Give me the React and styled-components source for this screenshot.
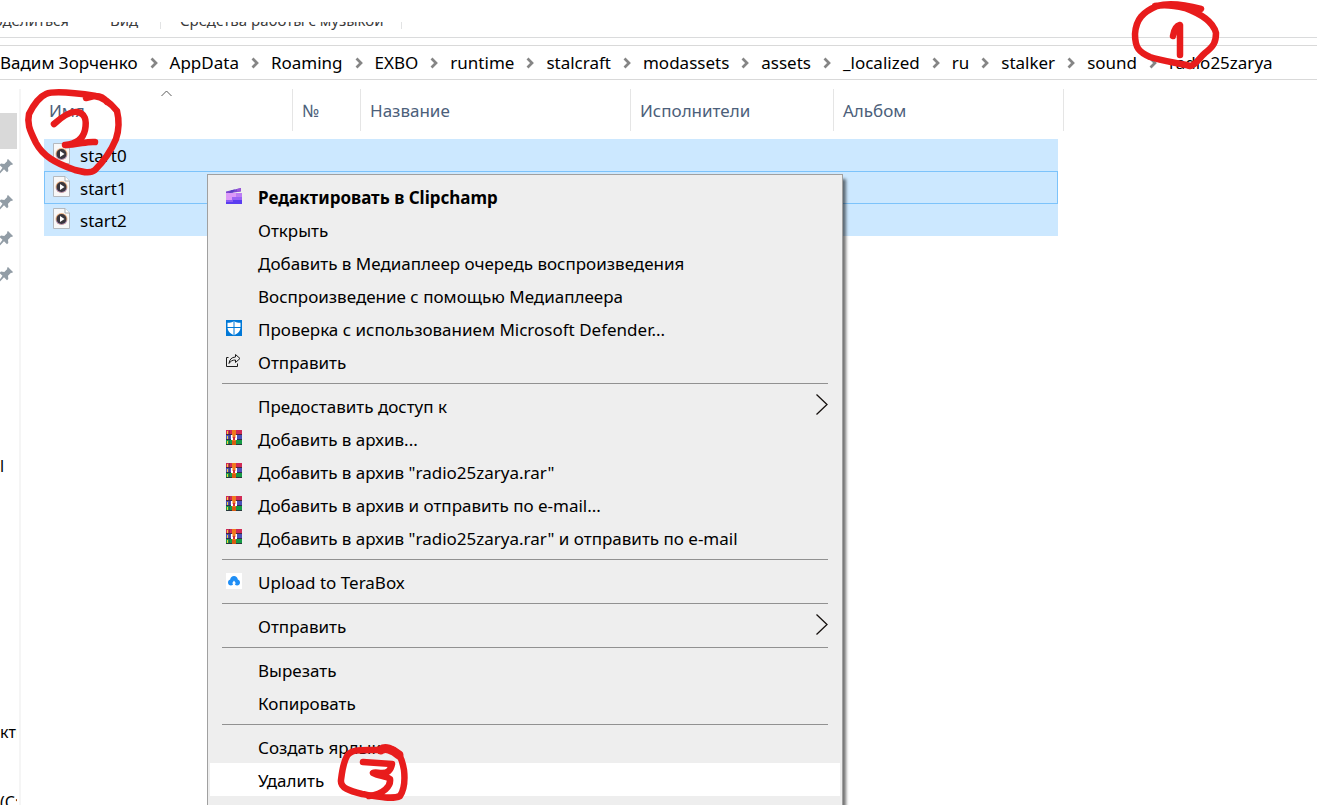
import React, { useState } from 'react'
import styled, { createGlobalStyle } from 'styled-components'

const GlobalStyle = createGlobalStyle`
  * {
    box-sizing: border-box;
  }

  body {
    margin: 0;
    background: #fff;
    color: #000;
    font-family: 'Noto Sans', 'Open Sans', sans-serif;
    font-size: 17px;
  }

  button {
    padding: 0;
    border: 0;
    background: none;
    color: inherit;
    font: inherit;
    text-align: left;
    white-space: nowrap;
  }
`

const Window = styled.div`
  position: relative;
  display: flex;
  flex-direction: column;
  height: 100vh;
  overflow: hidden;
`

const Ribbon = styled.header`
  padding-top: 22px;
  border-bottom: 1px solid #dadbdc;
`

const Tabs = styled.div`
  display: flex;
  align-items: flex-end;
  height: 15px;
  padding-bottom: 8px;
  overflow: hidden;
`

const Tab = styled.button`
  display: flex;
  flex: none;
  justify-content: ${props => (props.$end ? 'flex-end' : 'flex-start')};
  width: ${props => props.$width}px;
  padding-left: ${props => props.$indent || 0}px;
  color: #3b3b3b;
  font-size: 15px;
  line-height: 18px;
  border-right: ${props => (props.$divided ? '1px solid #e2e3e4' : '0')};
`

const AddressBar = styled.nav`
  display: flex;
  align-items: center;
  gap: 12px;
  height: 35px;
  margin-top: 7px;
  border-top: 1px solid #d9d9d9;
  border-bottom: 1px solid #d9d9d9;
  white-space: nowrap;
`

const Crumb = styled.button`
  flex: none;
  line-height: 24px;
`

const CrumbArrow = styled.svg`
  flex: none;
  width: 8px;
  height: 12px;
`

const Body = styled.div`
  display: flex;
  flex: 1;
  min-height: 0;
  padding-top: 9px;
`

const NavPane = styled.aside`
  flex: none;
  width: 21px;
  padding-top: 24px;
  border-right: 2px solid #f5f5f5;
  overflow: hidden;
`

const NavItem = styled.div`
  display: flex;
  align-items: center;
  width: 17px;
  height: 36px;
  margin-top: ${props => props.$space || 0}px;
  padding-bottom: 2px;
  background: ${props => (props.$active ? '#d9d9d9' : 'transparent')};
  font-size: 16px;
  overflow: hidden;
  white-space: nowrap;
`

const Files = styled.main`
  flex: 1;
  min-width: 0;
  padding-left: 23px;
`

const FileTable = styled.table`
  width: 1020px;
  table-layout: fixed;
  border-collapse: separate;
  border-spacing: 0;
`

const Column = styled.col`
  width: ${props => props.$width}px;
`

const HeadCell = styled.th`
  position: relative;
  height: 42px;
  padding: 0 0 0 ${props => (props.$first ? 5 : 9)}px;
  border-right: ${props => (props.$last ? '0' : '1px solid #e5e5e5')};
  color: #4c607a;
  font-weight: 400;
  text-align: left;
`

const SortMark = styled.svg`
  position: absolute;
  top: 1px;
  left: 117px;
  width: 12px;
  height: 7px;
`

const Spacer = styled.tr`
  height: 8px;
`

const Cell = styled.td`
  height: ${props => (props.$focused ? 33 : 32)}px;
  padding: 0;
  background: #cce8ff;
  border: 0 solid #7cc3fb;
  border-width: ${props => (props.$focused ? '1px 0' : '0')};

  &:first-child {
    border-left-width: ${props => (props.$focused ? 1 : 0)}px;
    padding-left: ${props => (props.$focused ? 8 : 9)}px;
  }

  &:nth-child(5) {
    border-right-width: ${props => (props.$focused ? 1 : 0)}px;
  }
`

const FileName = styled.div`
  display: flex;
  align-items: flex-start;
  gap: 10px;
  height: 24px;
  line-height: 26px;

  svg {
    width: 17px;
    height: 21px;
  }
`

const Menu = styled.ul`
  position: absolute;
  top: 174px;
  left: 207px;
  width: 636px;
  margin: 0;
  padding: 5px 2px;
  list-style: none;
  background: #eee;
  border: 1px solid #a0a0a0;
  box-shadow: 4px 4px 3px -1px rgba(0, 0, 0, 0.55);
`

const MenuItem = styled.button`
  display: flex;
  align-items: center;
  width: 100%;
  height: 33px;
  padding: 0 12px 0 16px;
  font-weight: ${props => (props.$bold ? 700 : 400)};
  background: ${props => (props.$hot ? '#fff' : 'transparent')};

  > svg {
    margin-bottom: 2px;
  }
`

const MenuIcon = styled.span`
  display: flex;
  flex: none;
  width: 32px;
  height: 17px;
`

const MenuText = styled.span`
  flex: 1;
  padding-top: 2px;
  line-height: 24px;
`

const Separator = styled.li`
  height: 11px;
  padding: 5px 12px;

  &::before {
    content: '';
    display: block;
    height: 1px;
    background: #919191;
  }
`

const Mark = styled.svg`
  position: absolute;
  top: ${props => props.$top}px;
  left: ${props => props.$left}px;
  fill: none;
  stroke: #e81c1c;
  stroke-width: 6.5;
  stroke-linecap: round;
  stroke-linejoin: round;
  pointer-events: none;
`

const PinIcon = () => (
  <svg width="13" height="15" viewBox="0 0 13 15" fill="#929da6">
    <path d="M8 0l5 5-1 1-1-.3-3 3 .3 3.3-1.300 1.300-3-3L0 14.500H-1L-1 13.500 2.500 8.800-.5 6 1 4.600l3.300.3 3-3L7 1z" />
  </svg>
)

const AudioFileIcon = () => (
  <svg viewBox="0 0 17 21">
    <path d="M.5.5h11.500l4.500 4.500v15.500H.5z" fill="#f8f8f8" stroke="#b4b9be" />
    <path d="M12 .5V5h4.500" fill="#fff" stroke="#a5abb0" />
    <circle cx="8.500" cy="11" r="6" fill="#e9b184" />
    <path d="M2.800 12.500a6 6 0 0 0 11.400 0z" fill="#a58bc0" />
    <circle cx="8.500" cy="11" r="5" fill="#3a363c" />
    <path d="M7 8l4.500 3-4.500 3z" fill="#fff" />
  </svg>
)

const ClipchampIcon = () => (
  <svg width="16" height="16" viewBox="0 0 16 16">
    <path d="M0 3.500L15 0v3.500L1 5.500H0z" fill="#7a48d0" />
    <path d="M5 2.300L9 1.400 7 4.500 3 5z" fill="#5b3fc4" />
    <path d="M11 1l4-1v3l-4 .8z" fill="#9a55d8" />
    <path d="M0 5h16v11H0z" fill="#9a63f5" />
    <path d="M0 5h10v4H6v3H0z" fill="#dc98f8" />
    <path d="M10 5h6v4h-6z" fill="#bb7cf4" />
    <path d="M0 12h16v4H0z" fill="#5a3df0" />
    <path d="M0 12h7v2H0z" fill="#8a5bf5" />
  </svg>
)

const DefenderIcon = () => (
  <svg width="16" height="16" viewBox="0 0 16 16">
    <path d="M0 0h16v16H0z" fill="#0078d7" />
    <path d="M8 1c2 1.500 4 1.800 6.500 1.800V7c0 4-2.500 6.500-6.500 8.200C4 13.500 1.500 11 1.500 7V2.800C4 2.800 6 2.500 8 1z" fill="#fff" />
    <path d="M8 1v14M1 7.500h14" stroke="#0078d7" />
  </svg>
)

const ShareIcon = () => (
  <svg width="16" height="16" viewBox="0 0 16 16" fill="none" stroke="#1c1c1c">
    <path d="M2.500 4.500h-2v9h11v-3" />
    <path d="M9.500 1.500l4.500 4-4.500 4V7C6.500 7 4.500 8 3 10.500 3.500 6.500 5.500 4.200 9.500 4z" />
  </svg>
)

const RarIcon = () => (
  <svg width="16" height="16" viewBox="0 0 16 16">
    <path d="M0 0h16v5H0z" fill="#d12a55" />
    <path d="M0 5h16v5H0z" fill="#4a50b8" />
    <path d="M0 10h16v5H0z" fill="#159a45" />
    <path d="M0 4.500h16M0 9.500h16M0 14.500h16" stroke="#2c2338" strokeOpacity=".8" />
    <path d="M1.500 1v3M1.500 6v3M1.500 11v3" stroke="#f3cf3a" />
    <path d="M3.500 0v15" stroke="#3a2a44" strokeOpacity=".5" />
    <path d="M6 0h4v15H6z" fill="#f07a1d" />
    <path d="M6 11h4v4H6z" fill="#d95a10" />
    <path d="M5 5h1.500v3h1V7h1v1h1V5H11v5H5z" fill="#fff" />
    <path d="M7 7h2v3H7z" fill="#d12a38" />
  </svg>
)

const TeraBoxIcon = () => (
  <svg width="16" height="16" viewBox="0 0 16 16">
    <path d="M0 0h16v16H0z" fill="#fff" />
    <path
      d="M4.200 6.500C4.500 4.500 6 3 8 3s3.500 1.500 3.800 3.500c1.300.3 2.200 1.500 2.200 2.900 0 1.700-1.300 3.100-3 3.100-1.200 0-2.200-.7-2.200-2H10L8 7.500 6 10.500h1.200c0 1.300-1 2-2.200 2-1.700 0-3-1.400-3-3.100 0-1.400.9-2.600 2.200-2.900z"
      fill="#1f8ef5"
    />
  </svg>
)

const SubmenuArrow = () => (
  <svg width="12" height="21" viewBox="0 0 12 21" fill="none" stroke="#16110f">
    <path d="M.5.5l10.500 10-10.500 10" strokeWidth="1.300" />
  </svg>
)

const crumbs = [
  'Вадим Зорченко',
  'AppData',
  'Roaming',
  'EXBO',
  'runtime',
  'stalcraft',
  'modassets',
  'assets',
  '_localized',
  'ru',
  'stalker',
  'sound',
  'radio25zarya',
]

const columns = [
  { label: 'Имя', width: 249 },
  { label: '№', width: 68 },
  { label: 'Название', width: 270 },
  { label: 'Исполнители', width: 203 },
  { label: 'Альбом', width: 224 },
]

const files = ['start0', 'start1', 'start2']

const menuGroups = [
  [
    { label: 'Редактировать в Clipchamp', Icon: ClipchampIcon, bold: true },
    { label: 'Открыть' },
    { label: 'Добавить в Медиаплеер очередь воспроизведения' },
    { label: 'Воспроизведение с помощью Медиаплеера' },
    { label: 'Проверка с использованием Microsoft Defender...', Icon: DefenderIcon },
    { label: 'Отправить', Icon: ShareIcon },
  ],
  [
    { label: 'Предоставить доступ к', submenu: true },
    { label: 'Добавить в архив...', Icon: RarIcon },
    { label: 'Добавить в архив "radio25zarya.rar"', Icon: RarIcon },
    { label: 'Добавить в архив и отправить по e-mail...', Icon: RarIcon },
    { label: 'Добавить в архив "radio25zarya.rar" и отправить по e-mail', Icon: RarIcon },
  ],
  [{ label: 'Upload to TeraBox', Icon: TeraBoxIcon }],
  [{ label: 'Отправить', submenu: true }],
  [{ label: 'Вырезать' }, { label: 'Копировать' }],
  [{ label: 'Создать ярлык' }, { label: 'Удалить' }, { label: '' }],
]

const ContextMenu = () => {
  const [hot, setHot] = useState('Удалить')

  return (
    <Menu role="menu">
      {menuGroups.map((group, index) => (
        <React.Fragment key={index}>
          {index > 0 && <Separator role="separator" />}
          {group.map(({ label, Icon, bold, submenu }) => (
            <li key={label} role="none">
              <MenuItem
                role="menuitem"
                $bold={bold}
                $hot={hot === label}
                onMouseEnter={() => setHot(label)}
              >
                <MenuIcon>{Icon && <Icon />}</MenuIcon>
                <MenuText>{label}</MenuText>
                {submenu && <SubmenuArrow />}
              </MenuItem>
            </li>
          ))}
        </React.Fragment>
      ))}
    </Menu>
  )
}

const App = () => {
  const [focused, setFocused] = useState('start1')

  return (
    <Window>
      <GlobalStyle />
      <Ribbon>
        <Tabs>
          <Tab $width={69} $end>оделиться</Tab>
          <Tab $width={92} $indent={41} $divided>Вид</Tab>
          <Tab $width={241} $indent={19} $divided>Средства работы с музыкой</Tab>
        </Tabs>
      </Ribbon>

      <AddressBar>
        {crumbs.map((crumb, index) => (
          <React.Fragment key={crumb}>
            {index > 0 && (
              <CrumbArrow viewBox="0 0 8 12" fill="none" stroke="#858585" strokeWidth="2.700">
                <path d="M1.500 1.500L6 6l-4.500 4.500" />
              </CrumbArrow>
            )}
            <Crumb>{crumb}</Crumb>
          </React.Fragment>
        ))}
      </AddressBar>

      <Body>
        <NavPane>
          <NavItem $active />
          <NavItem><PinIcon /></NavItem>
          <NavItem><PinIcon /></NavItem>
          <NavItem><PinIcon /></NavItem>
          <NavItem><PinIcon /></NavItem>
          <NavItem $space={156}>l</NavItem>
          <NavItem $space={230}>кты</NavItem>
          <NavItem $space={34}>(C:)</NavItem>
        </NavPane>

        <Files>
          <FileTable>
            <colgroup>
              {columns.map(column => (
                <Column key={column.label} $width={column.width} />
              ))}
              <Column $width={6} />
            </colgroup>
            <thead>
              <tr>
                {columns.map((column, index) => (
                  <HeadCell
                    key={column.label}
                    $first={index === 0}
                    $last={index === columns.length - 1}
                  >
                    {column.label}
                    {index === 0 && (
                      <SortMark viewBox="0 0 12 7" fill="none" stroke="#5a5a5a">
                        <path d="M.5 6l5-5 5 5" />
                      </SortMark>
                    )}
                  </HeadCell>
                ))}
                <HeadCell />
              </tr>
            </thead>
            <tbody>
              <Spacer />
              {files.map(file => (
                <tr key={file} onClick={() => setFocused(file)}>
                  <Cell $focused={focused === file}>
                    <FileName>
                      <AudioFileIcon />
                      {file}
                    </FileName>
                  </Cell>
                  <Cell $focused={focused === file} />
                  <Cell $focused={focused === file} />
                  <Cell $focused={focused === file} />
                  <Cell $focused={focused === file} />
                </tr>
              ))}
            </tbody>
          </FileTable>
        </Files>
      </Body>

      <ContextMenu />

      <Mark $top={0} $left={1128} width="96" height="76">
        <path d="M73 9C58 5 40 3 29 6 15 12 8 19 7 34c0 14 4 18 15 23 12 4 28 6 40 9 6-1 8-7 15-13 9-7 11-11 11-20-3-12-15-19-31-25-8-2-20-4-30-2" />
        <path d="M45 36c1-6 3-10 7-11v30" />
      </Mark>
      <Mark $top={86} $left={20} width="106" height="90">
        <path d="M66 12l8-2c8 1 15 5 23 15 2 8 2 19-1 28-5 12-14 24-21 31-5 4-12 2-20 0-20-7-32-14-39-27-7-14-9-20-7-29C14 18 19 11 26 8c9-4 37 0 50 2 4 0 8 2 11 6" />
        <path d="M34 38c10-9 17-13 23-12 8 1 10 8 8 18-2 9-9 14-20 15 13 0 22-4 30-3" />
      </Mark>
      <Mark $top={740} $left={332} width="82" height="65">
        <path d="M46 10c-17 0-27-1-31 6-4 7-5 16-6 24-1 8 9 11 21 14 12 2 30 6 38 2 4-6 5-17 4-26-2-11-4-17-13-21-3-1-6-1-9 0" />
        <path d="M49 10c4-3 11-1 18 5" strokeWidth="9" />
        <path d="M31 22l29 2c-1 5-3 9-10 9-4 0-7-1-9 0 5 3 14 3 17 6 1 7-6 15-21 17" />
      </Mark>
    </Window>
  )
}

export default App
